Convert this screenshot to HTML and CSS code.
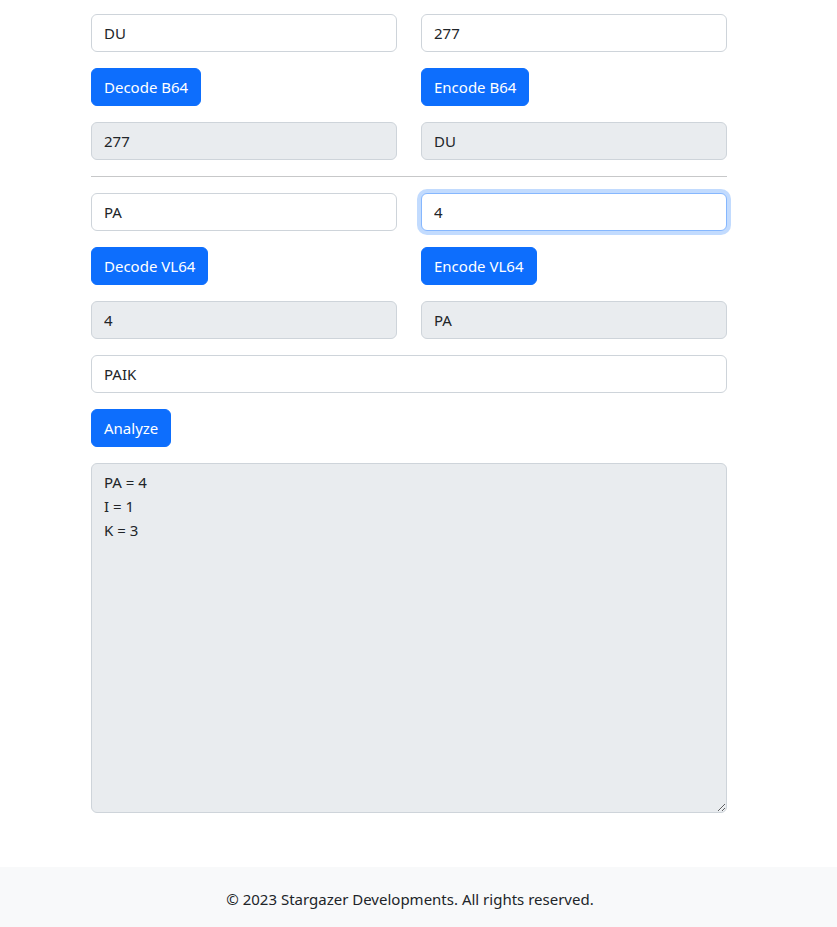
FILE: index.html
```html
<!DOCTYPE html>
<html lang="en">

<head>
    <meta charset="UTF-8">
    <meta name="viewport" content="width=device-width, initial-scale=1.0">
    <title>B64 / VL64 Tool</title>
    <link rel="stylesheet" href="styles.css">
</head>

<body>
    <div class="container">
        <div class="row">
            <div class="col">
                <input type="text" class="form-control" value="DU">
                <button class="btn">Decode B64</button>
                <input type="text" class="form-control" value="277" disabled>
            </div>
            <div class="col">
                <input type="text" class="form-control" value="277">
                <button class="btn">Encode B64</button>
                <input type="text" class="form-control" value="DU" disabled>
            </div>
        </div>
        <hr>
        <div class="row">
            <div class="col">
                <input type="text" class="form-control" value="PA">
                <button class="btn">Decode VL64</button>
                <input type="text" class="form-control" value="4" disabled>
            </div>
            <div class="col">
                <input type="text" class="form-control focus" value="4">
                <button class="btn">Encode VL64</button>
                <input type="text" class="form-control" value="PA" disabled>
            </div>
        </div>
        <div class="analyze">
            <input type="text" class="form-control" value="PAIK">
            <button class="btn">Analyze</button>
            <textarea class="form-control result" disabled>PA = 4
I = 1
K = 3</textarea>
        </div>
    </div>
    <footer class="footer">
        <span>&copy; 2023 Stargazer Developments. All rights reserved.</span>
    </footer>
</body>

</html>
```

FILE: styles.css
```css
* {
    margin: 0;
    padding: 0;
    box-sizing: border-box;
}

body {
    background-color: #ffffff;
    color: #212529;
    font-family: "Noto Sans", "Open Sans", sans-serif;
    font-size: 15px;
    line-height: 24px;
}

.container {
    width: 636px;
    margin-left: 91px;
    padding-top: 14px;
    padding-bottom: 54px;
}

.row {
    display: flex;
    gap: 24px;
}

.col {
    flex: 1;
    display: flex;
    flex-direction: column;
    align-items: flex-start;
    gap: 16px;
}

.form-control {
    display: block;
    width: 100%;
    height: 38px;
    padding: 6px 12px;
    font-family: inherit;
    font-size: 15px;
    line-height: 24px;
    color: #212529;
    background-color: #ffffff;
    border: 1px solid #ced4da;
    border-radius: 6px;
    outline: none;
}

.form-control:disabled {
    background-color: #e9ecef;
    opacity: 1;
}

.focus {
    border-color: #86b7fe;
    box-shadow: 0 0 0 4px rgba(13, 110, 253, 0.25);
}

.btn {
    height: 38px;
    padding: 6px 12px;
    font-family: inherit;
    font-size: 15px;
    line-height: 24px;
    color: #ffffff;
    background-color: #0d6efd;
    border: 1px solid #0d6efd;
    border-radius: 6px;
}

hr {
    margin: 16px 0;
    border: none;
    border-top: 1px solid #212529;
    opacity: 0.25;
}

.analyze {
    margin-top: 16px;
    display: flex;
    flex-direction: column;
    align-items: flex-start;
    gap: 16px;
}

.result {
    height: 350px;
    resize: vertical;
}

.footer {
    background-color: #f8f9fa;
    height: 60px;
    padding-top: 20px;
    padding-right: 17px;
    text-align: center;
}
```
